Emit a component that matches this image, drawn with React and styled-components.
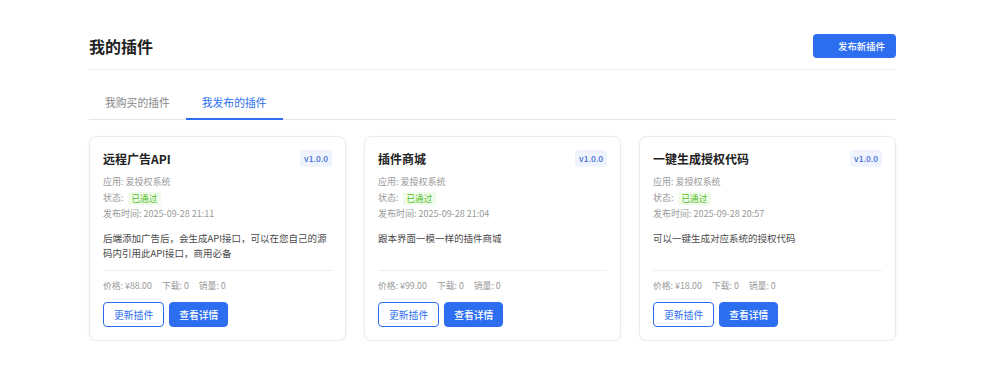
import React from "react";
import styled, { createGlobalStyle } from "styled-components";

const GlobalStyle = createGlobalStyle`
  body {
    margin: 0;
    background: #ffffff;
    font-family: "Noto Sans CJK SC", "Noto Sans", sans-serif;
    color: #222;
  }
`;

const Page = styled.div`
  width: 807px;
  padding: 34px 0 0 89px;
`;

const Header = styled.div`
  display: flex;
  justify-content: space-between;
  align-items: center;
  padding-bottom: 11px;
  border-bottom: 1px solid #eeeeee;
`;

const Title = styled.h1`
  margin: 0;
  font-size: 16px;
  font-weight: 700;
  color: #222;
  line-height: 24px;
`;

const PrimaryButton = styled.button`
  display: flex;
  align-items: center;
  height: 24px;
  padding: 0 11px 0 10px;
  border: none;
  border-radius: 4px;
  background: #2d6ef0;
  color: #fff;
  font-family: inherit;
  font-size: 9.4px;
  font-weight: 500;
  cursor: pointer;
`;

const IconSlot = styled.span`
  display: inline-block;
  width: 15px;
`;

const Tabs = styled.div`
  display: flex;
  margin-top: 16px;
  border-bottom: 1px solid #e6e6e6;
`;

const Tab = styled.div`
  padding: 0 16px;
  height: 32px;
  display: flex;
  align-items: center;
  font-size: 10.8px;
  color: ${(p) => (p.$active ? "#2d6ef0" : "#888")};
  border-bottom: 2px solid ${(p) => (p.$active ? "#2d6ef0" : "transparent")};
  margin-bottom: -1px;
  cursor: pointer;
`;

const Grid = styled.div`
  display: grid;
  grid-template-columns: repeat(3, 1fr);
  gap: 18px;
  margin-top: 16px;
`;

const Card = styled.div`
  display: flex;
  flex-direction: column;
  padding: 13px;
  border: 1px solid #ebebeb;
  border-radius: 8px;
  box-shadow: 0 1px 4px rgba(0, 0, 0, 0.05);
  background: #fff;
`;

const CardHead = styled.div`
  display: flex;
  justify-content: space-between;
  align-items: center;
  height: 17px;
`;

const CardTitle = styled.h3`
  margin: 0;
  font-size: 12px;
  font-weight: 700;
  color: #222;
`;

const Version = styled.span`
  padding: 0 4px;
  height: 17px;
  line-height: 17px;
  border-radius: 4px;
  background: #eef3fe;
  color: #3a6ad6;
  font-size: 8.4px;
  font-weight: 500;
`;

const Meta = styled.div`
  margin-top: 7px;
  font-size: 9px;
  line-height: 16px;
  color: #999;
`;

const MetaLine = styled.div`
  display: flex;
  align-items: center;
`;

const Status = styled.span`
  margin-left: 4px;
  padding: 0 4px;
  height: 13px;
  line-height: 13px;
  border-radius: 2px;
  background: #f1fbea;
  color: #4fbf1f;
  font-size: 8.6px;
`;

const Desc = styled.p`
  margin: 9px 0 0;
  font-size: 9.5px;
  line-height: 14.5px;
  color: #4a4a4a;
`;

const Footer = styled.div`
  margin-top: auto;
  padding-top: 10px;
`;

const Divider = styled.div`
  border-top: 1px solid #eeeeee;
`;

const Stats = styled.div`
  display: flex;
  gap: 10px;
  margin-top: 8px;
  font-size: 8.8px;
  line-height: 14px;
  color: #999;
`;

const Actions = styled.div`
  display: flex;
  gap: 5px;
  margin-top: 9px;
`;

const ActionButton = styled.button`
  height: 25px;
  padding: 0 ${(p) => (p.$filled ? "9px" : "10px")};
  border-radius: 4px;
  border: 1px solid #2d6ef0;
  background: ${(p) => (p.$filled ? "#2d6ef0" : "#fff")};
  color: ${(p) => (p.$filled ? "#fff" : "#2d6ef0")};
  font-family: inherit;
  font-size: 9.8px;
  font-weight: ${(p) => (p.$filled ? 500 : 400)};
  cursor: pointer;
`;

const plugins = [
  {
    name: "远程广告API",
    time: "2025-09-28 21:11",
    desc: "后端添加广告后，会生成API接口，可以在您自己的源码内引用此API接口，商用必备",
    price: "88.00",
  },
  {
    name: "插件商城",
    time: "2025-09-28 21:04",
    desc: "跟本界面一模一样的插件商城",
    price: "99.00",
  },
  {
    name: "一键生成授权代码",
    time: "2025-09-28 20:57",
    desc: "可以一键生成对应系统的授权代码",
    price: "18.00",
  },
];

const App = () => {
  return (
    <>
      <GlobalStyle />
      <Page>
        <Header>
          <Title>我的插件</Title>
          <PrimaryButton>
            <IconSlot />
            发布新插件
          </PrimaryButton>
        </Header>

        <Tabs>
          <Tab>我购买的插件</Tab>
          <Tab $active>我发布的插件</Tab>
        </Tabs>

        <Grid>
          {plugins.map((p) => (
            <Card key={p.name}>
              <CardHead>
                <CardTitle>{p.name}</CardTitle>
                <Version>v1.0.0</Version>
              </CardHead>
              <Meta>
                <MetaLine>应用: 爱授权系统</MetaLine>
                <MetaLine>
                  状态:<Status>已通过</Status>
                </MetaLine>
                <MetaLine>发布时间: {p.time}</MetaLine>
              </Meta>
              <Desc>{p.desc}</Desc>
              <Footer>
                <Divider />
                <Stats>
                  <span>价格: ¥{p.price}</span>
                  <span>下载: 0</span>
                  <span>销量: 0</span>
                </Stats>
                <Actions>
                  <ActionButton>更新插件</ActionButton>
                  <ActionButton $filled>查看详情</ActionButton>
                </Actions>
              </Footer>
            </Card>
          ))}
        </Grid>
      </Page>
    </>
  );
};

export default App;
